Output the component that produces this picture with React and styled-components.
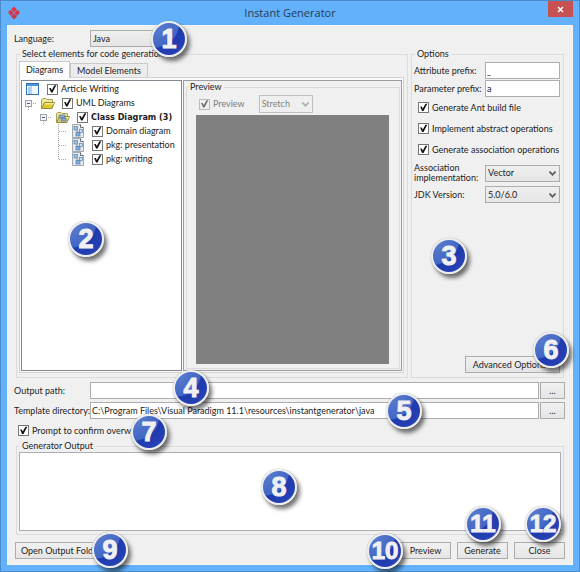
import React from "react";
import styled, { createGlobalStyle, css } from "styled-components";

const GlobalStyle = createGlobalStyle`
  *, *::before, *::after { box-sizing: border-box; }
  body { margin: 0; }
  body, button, input, select, textarea {
    font-family: Lato, "DejaVu Sans Condensed", sans-serif;
    font-size: 9px;
    line-height: 10px;
    color: #1c1c1c;
  }
`;

const Window = styled.div`
  display: flex;
  flex-direction: column;
  min-height: 100vh;
  padding: 0 6px 6px 6px;
  background: #63b1fb;
  border: 1px solid #4a8ccb;
`;

const TitleBar = styled.header`
  display: grid;
  grid-template-columns: 48px 1fr 48px;
  align-items: center;
  height: 24px;
`;

const Title = styled.h1`
  margin: 0;
  font: 400 11px/16px "Open Sans", "Noto Sans", sans-serif;
  color: #263c52;
  text-align: center;
`;

const AppLogo = styled.svg`
  width: 14px;
  height: 14px;
`;

const CloseBox = styled.button`
  display: grid;
  place-items: center;
  justify-self: end;
  align-self: start;
  width: 25px;
  height: 16px;
  padding: 0;
  border: 0;
  background: #c75050;
`;

const Body = styled.main`
  display: flex;
  flex: 1;
  flex-direction: column;
  padding: 4px 7px 5px 7px;
  background: #f0f0f0;
  border: 1px solid #f8f6f2;
`;

const LanguageRow = styled.div`
  display: grid;
  grid-template-columns: 75px 92px;
  align-items: center;
`;

const Columns = styled.div`
  display: grid;
  flex: 1;
  grid-template-columns: minmax(0, 1fr) 153px;
  gap: 3px;
  margin: 2px 1px 4px;
`;

const Group = styled.fieldset`
  position: relative;
  display: flex;
  flex-direction: column;
  min-width: 0;
  margin: 0;
  padding: ${(p) => p.$pad || "3px"};
  border: 1px solid #dcdcdc;
`;

const Legend = styled.legend`
  margin-left: ${(p) => p.$inset || "1px"};
  padding: 0 2px;
  white-space: nowrap;
`;

const Tabs = styled.div`
  display: flex;
  align-items: flex-end;
`;

const Tab = styled.button`
  height: ${(p) => (p.$active ? "17px" : "14px")};
  margin-bottom: ${(p) => (p.$active ? "-1px" : "0")};
  padding: 0 6px;
  white-space: nowrap;
  background: ${(p) => (p.$active ? "#fcfcfc" : "#ececec")};
  border: 1px solid #c9c9c9;
  border-bottom: 0;
  ${(p) => p.$active && css`z-index: 1;`}
`;

const TabPanel = styled.div`
  display: grid;
  flex: 1;
  grid-template-columns: 161px minmax(0, 1fr);
  gap: 1px;
  padding: 2px 1px 1px;
  background: #fafafa;
  border: 1px solid #d2d2d2;
`;

const Tree = styled.ul`
  position: relative;
  margin: 0;
  padding: 1px 0 0 3px;
  list-style: none;
  background: #fff;
  border: 1px solid #828790;
`;

const TreeRow = styled.li`
  display: flex;
  align-items: center;
  height: 14px;
  padding-left: ${(p) => p.$depth * 15}px;
  white-space: nowrap;
`;

const TreeLabel = styled.label`
  display: flex;
  align-items: center;
  gap: 3px;
  margin-left: 6px;
  ${(p) => p.$bold && css`
    font-family: "DejaVu Sans Condensed", sans-serif;
    font-weight: 700;
  `}
`;

const Icon = styled.svg`
  display: block;
  flex: none;
`;

const PreviewPane = styled.section`
  display: flex;
  padding: 0 1px 1px 2px;
  background: #f0f0f0;
  border: 1px solid #9a9da3;
`;

const PreviewGroup = styled(Group)`
  flex: 1;
  margin-top: 1px;
`;

const PreviewTools = styled.div`
  display: flex;
  align-items: center;
  gap: 14px;
  padding: 0 3px 2px 3px;
`;

const PreviewCanvas = styled.div`
  flex: 1;
  background: #808080;
`;

const CheckLabel = styled.label`
  display: flex;
  align-items: center;
  gap: 3px;
  color: ${(p) => (p.$muted ? "#7c7c7c" : "inherit")};
  white-space: nowrap;
`;

const Check = styled.input.attrs({ type: "checkbox" })`
  appearance: none;
  flex: none;
  width: 11px;
  height: 11px;
  margin: 0;
  border: 1px solid #777;
  background: #fff;
  &::before {
    content: "";
    display: block;
    width: 9px;
    height: 9px;
  }
  &:checked::before {
    background: #111;
    clip-path: polygon(12% 38%, 30% 38%, 42% 62%, 72% 8%, 92% 8%, 50% 90%, 34% 90%);
  }
  &:disabled {
    border-color: #bcbcbc;
    background: #eee;
  }
  &:disabled::before { background: #707070; }
`;

const OptionGrid = styled.div`
  display: grid;
  grid-template-columns: 71px minmax(0, 1fr);
  align-items: center;
  row-gap: ${(p) => p.$gap};
  white-space: nowrap;
`;

const CheckList = styled.div`
  display: grid;
  gap: 10px;
  padding: 5px 0 8px 4px;
`;

const TextBox = styled.input`
  display: block;
  width: 100%;
  min-width: 0;
  height: 17px;
  padding: 0 1px;
  background: #fff;
  border: 1px solid #abadb3;
`;

const SelectShell = styled.span`
  position: relative;
  display: block;
  width: ${(p) => p.$width || "100%"};
`;

const SelectBox = styled.select`
  display: block;
  appearance: none;
  width: 100%;
  height: ${(p) => p.$height || "17px"};
  padding: 0 14px 0 2px;
  background: linear-gradient(#efefef, #e5e5e5);
  border: 1px solid #acacac;
  border-radius: 0;
  &:disabled {
    color: #838383;
    background: #efefef;
    border-color: #bfbfbf;
    opacity: 1;
  }
`;

const Arrow = styled.svg`
  position: absolute;
  right: 4px;
  top: 50%;
  width: 7px;
  height: 5px;
  margin-top: -2px;
  pointer-events: none;
`;

const Button = styled.button`
  width: ${(p) => p.$width || "auto"};
  height: 17px;
  padding: 0;
  white-space: nowrap;
  background: linear-gradient(#f1f1f1, #e5e5e5);
  border: 1px solid #acacac;
`;

const AdvancedRow = styled.div`
  display: flex;
  justify-content: flex-end;
  margin-top: auto;
`;

const Paths = styled.div`
  display: grid;
  grid-template-columns: 74px minmax(0, 1fr) 25px;
  align-items: center;
  gap: 3px 1px;
  white-space: nowrap;
`;

const PathLabel = styled.label`
  margin-left: -1px;
`;

const PromptRow = styled.div`
  display: flex;
  margin: 6px 0 5px 3px;
`;

const OutputGroup = styled(Group)`
  margin: 0 1px;
`;

const Output = styled.textarea`
  display: block;
  width: 100%;
  height: 79px;
  resize: none;
  background: #fff;
  border: 1px solid #abadb3;
`;

const Actions = styled.footer`
  display: flex;
  gap: 6px;
  margin-top: 7px;
`;

const Spacer = styled.div`
  flex: 1;
`;

const Anchor = styled.div`
  position: relative;
`;

const Badge = styled.span`
  position: absolute;
  z-index: 3;
  top: ${(p) => p.$top};
  left: ${(p) => p.$left || "auto"};
  right: ${(p) => p.$right || "auto"};
  display: grid;
  place-items: center;
  width: 36px;
  height: 36px;
  border: 2px solid #ededf0;
  border-radius: 50%;
  background: radial-gradient(circle at 5% 0%, #5e80d0 0, #4266c4 54%, #1e3aac 57%, #2440b4 80%, #3f62c8 100%);
  box-shadow: 0 0 1px #777, 3px 4px 4px rgba(0, 0, 0, 0.55);
  font: 700 ${(p) => (p.$wide ? "24px" : "27px")}/32px "Liberation Sans", sans-serif;
  color: #f0f0f2;
  -webkit-text-stroke: 1px #f0f0f2;
  pointer-events: none;
`;

function Dropdown({ id, value, width, height, disabled, label }) {
  return (
    <SelectShell $width={width}>
      <SelectBox id={id} defaultValue={value} disabled={disabled} $height={height} aria-label={label}>
        <option>{value}</option>
      </SelectBox>
      <Arrow viewBox="0 0 7 5">
        <path d="M0.5 0.5 L3.5 3.8 L6.5 0.5" fill="none" stroke={disabled ? "#aaa" : "#555"} strokeWidth="1.6" />
      </Arrow>
    </SelectShell>
  );
}

function Guide({ open, last }) {
  return (
    <Icon width="15" height="14" viewBox="0 0 15 14">
      {open ? (
        <>
          <path d="M3.5 11V14 M8 7.5H12" stroke="#aaa" strokeDasharray="1 1" />
          <rect x="0.5" y="4.5" width="6" height="6" fill="#f5f7fa" stroke="#9aa3ad" />
          <path d="M2 7.5H5" stroke="#4a5b80" />
        </>
      ) : (
        <path d={last ? "M3.5 0V7.5H12" : "M3.5 0V14 M4 7.5H12"} fill="none" stroke="#aaa" strokeDasharray="1 1" />
      )}
    </Icon>
  );
}

function ProjectIcon() {
  return (
    <Icon width="16" height="14" viewBox="0 0 16 14">
      <rect x="1.5" y="1.5" width="12" height="11" fill="#fff" stroke="#2f6fb5" />
      <path d="M2 2H13V4H2Z" fill="#4b95dc" />
      <path d="M3 5H5V12H3Z" fill="#a4cdf4" />
      <path d="M6 4V12" stroke="#74a8da" />
      <path d="M7 5H13V12H7Z" fill="#f2f7fc" />
    </Icon>
  );
}

function FolderIcon({ diagram }) {
  return (
    <Icon width="16" height="14" viewBox="0 0 16 14">
      <path d="M1.5 12V3.5L2.5 2.5H6L7 3.5H12.5V6" fill="#f2e69c" stroke="#aaa05a" />
      <path d="M1.5 12.5L4.5 6.5H14.5L12 12.5Z" fill={diagram ? "#d8cf79" : "#dcc832"} stroke="#968b34" />
      <path d="M5 7H14L13.5 8.5H4.5Z" fill="#f8ec90" />
      {diagram && <path d="M4 5H10V8H4Z M6 8V11H11V8Z" fill="#8eaad0" stroke="#587999" strokeWidth="0.7" />}
    </Icon>
  );
}

function DiagramIcon() {
  return (
    <Icon width="16" height="14" viewBox="0 0 16 14">
      <path d="M2.5 0.5H10.5L13.5 3.5V13.5H2.5Z" fill="#e6e9ed" stroke="#a4a9b0" />
      <path d="M10.5 0.5V3.5H13.5" fill="#fff" stroke="#687078" />
      <path d="M6 5L8 9 M11 6L8 9" fill="none" stroke="#6d8cad" />
      <rect x="4" y="2.5" width="3.5" height="3.5" fill="#9ec4ea" stroke="#5d82a8" strokeWidth="0.7" />
      <rect x="9.5" y="5.5" width="3" height="3" fill="#cce0f3" stroke="#5d82a8" strokeWidth="0.7" />
      <rect x="6" y="8.5" width="4" height="3.5" fill="#7aace4" stroke="#5d82a8" strokeWidth="0.7" />
    </Icon>
  );
}

const nodes = [
  { text: "Article Writing", depth: 0, icon: <ProjectIcon /> },
  { text: "UML Diagrams", depth: 0, guide: <Guide open />, icon: <FolderIcon /> },
  { text: "Class Diagram (3)", depth: 1, guide: <Guide open />, icon: <FolderIcon diagram />, bold: true },
  { text: "Domain diagram", depth: 2, guide: <Guide />, icon: <DiagramIcon /> },
  { text: "pkg: presentation", depth: 2, guide: <Guide />, icon: <DiagramIcon /> },
  { text: "pkg: writing", depth: 2, guide: <Guide last />, icon: <DiagramIcon /> },
];

const checks = ["Generate Ant build file", "Implement abstract operations", "Generate association operations"];

export default function App() {
  return (
    <>
      <GlobalStyle />
      <Window>
        <TitleBar>
          <AppLogo viewBox="0 0 14 14">
            <path d="M7 0.5L10 3.5L7 6.5L4 3.5Z" fill="#e2353f" />
            <path d="M4 4.2L6.6 7L4 9.8L1.5 7V5Z M10 4.2L12.5 5V7L10 9.8L7.4 7Z" fill="#d93643" />
            <path d="M7 7.4L10 10.4L7 13.6L4 10.4Z" fill="#c93a4c" />
            <path d="M1.5 7L4 9.8L7 7L10 9.8L12.5 7" fill="none" stroke="#9a5a80" strokeWidth="0.6" />
          </AppLogo>
          <Title>Instant Generator</Title>
          <CloseBox aria-label="Close window">
            <Icon width="7" height="7" viewBox="0 0 7 7">
              <path d="M1 1L6 6M6 1L1 6" stroke="#fff" strokeWidth="1.5" />
            </Icon>
          </CloseBox>
        </TitleBar>
        <Body>
          <LanguageRow>
            <PathLabel htmlFor="language">Language:</PathLabel>
            <Anchor>
              <Dropdown id="language" value="Java" />
              <Badge $top="-9px" $left="61px">1</Badge>
            </Anchor>
          </LanguageRow>

          <Columns>
            <Group $pad="2px 3px 4px 2px">
              <Legend>Select elements for code generation</Legend>
              <Tabs role="tablist">
                <Tab role="tab" aria-selected="true" $active>Diagrams</Tab>
                <Tab role="tab" aria-selected="false">Model Elements</Tab>
              </Tabs>
              <TabPanel role="tabpanel">
                <Tree>
                  {nodes.map((n) => (
                    <TreeRow key={n.text} $depth={n.depth}>
                      {n.guide}
                      {n.icon}
                      <TreeLabel $bold={n.bold}>
                        <Check defaultChecked />
                        {n.text}
                      </TreeLabel>
                    </TreeRow>
                  ))}
                  <Badge $top="140px" $left="46px">2</Badge>
                </Tree>
                <PreviewPane>
                  <PreviewGroup $pad="3px 10px 4px 9px">
                    <Legend $inset="-8px">Preview</Legend>
                    <PreviewTools>
                      <CheckLabel $muted>
                        <Check defaultChecked disabled />
                        Preview
                      </CheckLabel>
                      <Dropdown value="Stretch" width="54px" height="18px" label="Preview size" disabled />
                    </PreviewTools>
                    <PreviewCanvas />
                  </PreviewGroup>
                </PreviewPane>
              </TabPanel>
            </Group>

            <Group $pad="3px 3px 4px 2px">
              <Legend>Options</Legend>
              <OptionGrid $gap="1px">
                <label htmlFor="attr">Attribute prefix:</label>
                <TextBox id="attr" defaultValue="_" />
                <label htmlFor="param">Parameter prefix:</label>
                <TextBox id="param" defaultValue="a" />
              </OptionGrid>
              <CheckList>
                {checks.map((c) => (
                  <CheckLabel key={c}>
                    <Check defaultChecked />
                    {c}
                  </CheckLabel>
                ))}
              </CheckList>
              <OptionGrid $gap="3px">
                <label htmlFor="assoc">Association<br />implementation:</label>
                <Dropdown id="assoc" value="Vector" />
                <label htmlFor="jdk">JDK Version:</label>
                <Dropdown id="jdk" value="5.0/6.0" />
              </OptionGrid>
              <AdvancedRow>
                <Button $width="95px">Advanced Options...</Button>
              </AdvancedRow>
              <Badge $top="179px" $left="19px">3</Badge>
              <Badge $top="273px" $right="-6px">6</Badge>
            </Group>
          </Columns>

          <Paths>
            <PathLabel htmlFor="out">Output path:</PathLabel>
            <Anchor>
              <TextBox id="out" />
              <Badge $top="-12px" $left="83px">4</Badge>
            </Anchor>
            <Button aria-label="Browse output path">...</Button>
            <PathLabel htmlFor="tpl">Template directory:</PathLabel>
            <Anchor>
              <TextBox id="tpl" defaultValue="C:\Program Files\Visual Paradigm 11.1\resources\instantgenerator\java" />
              <Badge $top="-9px" $right="117px">5</Badge>
            </Anchor>
            <Button aria-label="Browse template directory">...</Button>
          </Paths>

          <PromptRow>
            <Anchor>
              <CheckLabel>
                <Check defaultChecked />
                Prompt to confirm overwrite
              </CheckLabel>
              <Badge $top="-11px" $left="113px">7</Badge>
            </Anchor>
          </PromptRow>

          <OutputGroup $pad="1px 2px 3px 2px">
            <Legend>Generator Output</Legend>
            <Output aria-label="Generator Output" />
            <Badge $top="18px" $left="244px">8</Badge>
          </OutputGroup>

          <Actions>
            <Anchor>
              <Button $width="92px">Open Output Folder</Button>
              <Badge $top="-10px" $left="77px">9</Badge>
            </Anchor>
            <Spacer />
            <Anchor>
              <Button $width="51px">Preview</Button>
              <Badge $top="-9px" $left="-33px" $wide>10</Badge>
            </Anchor>
            <Anchor>
              <Button $width="51px">Generate</Button>
              <Badge $top="-36px" $left="8px" $wide>11</Badge>
            </Anchor>
            <Anchor>
              <Button $width="51px">Close</Button>
              <Badge $top="-36px" $left="11px" $wide>12</Badge>
            </Anchor>
          </Actions>
        </Body>
      </Window>
    </>
  );
}
